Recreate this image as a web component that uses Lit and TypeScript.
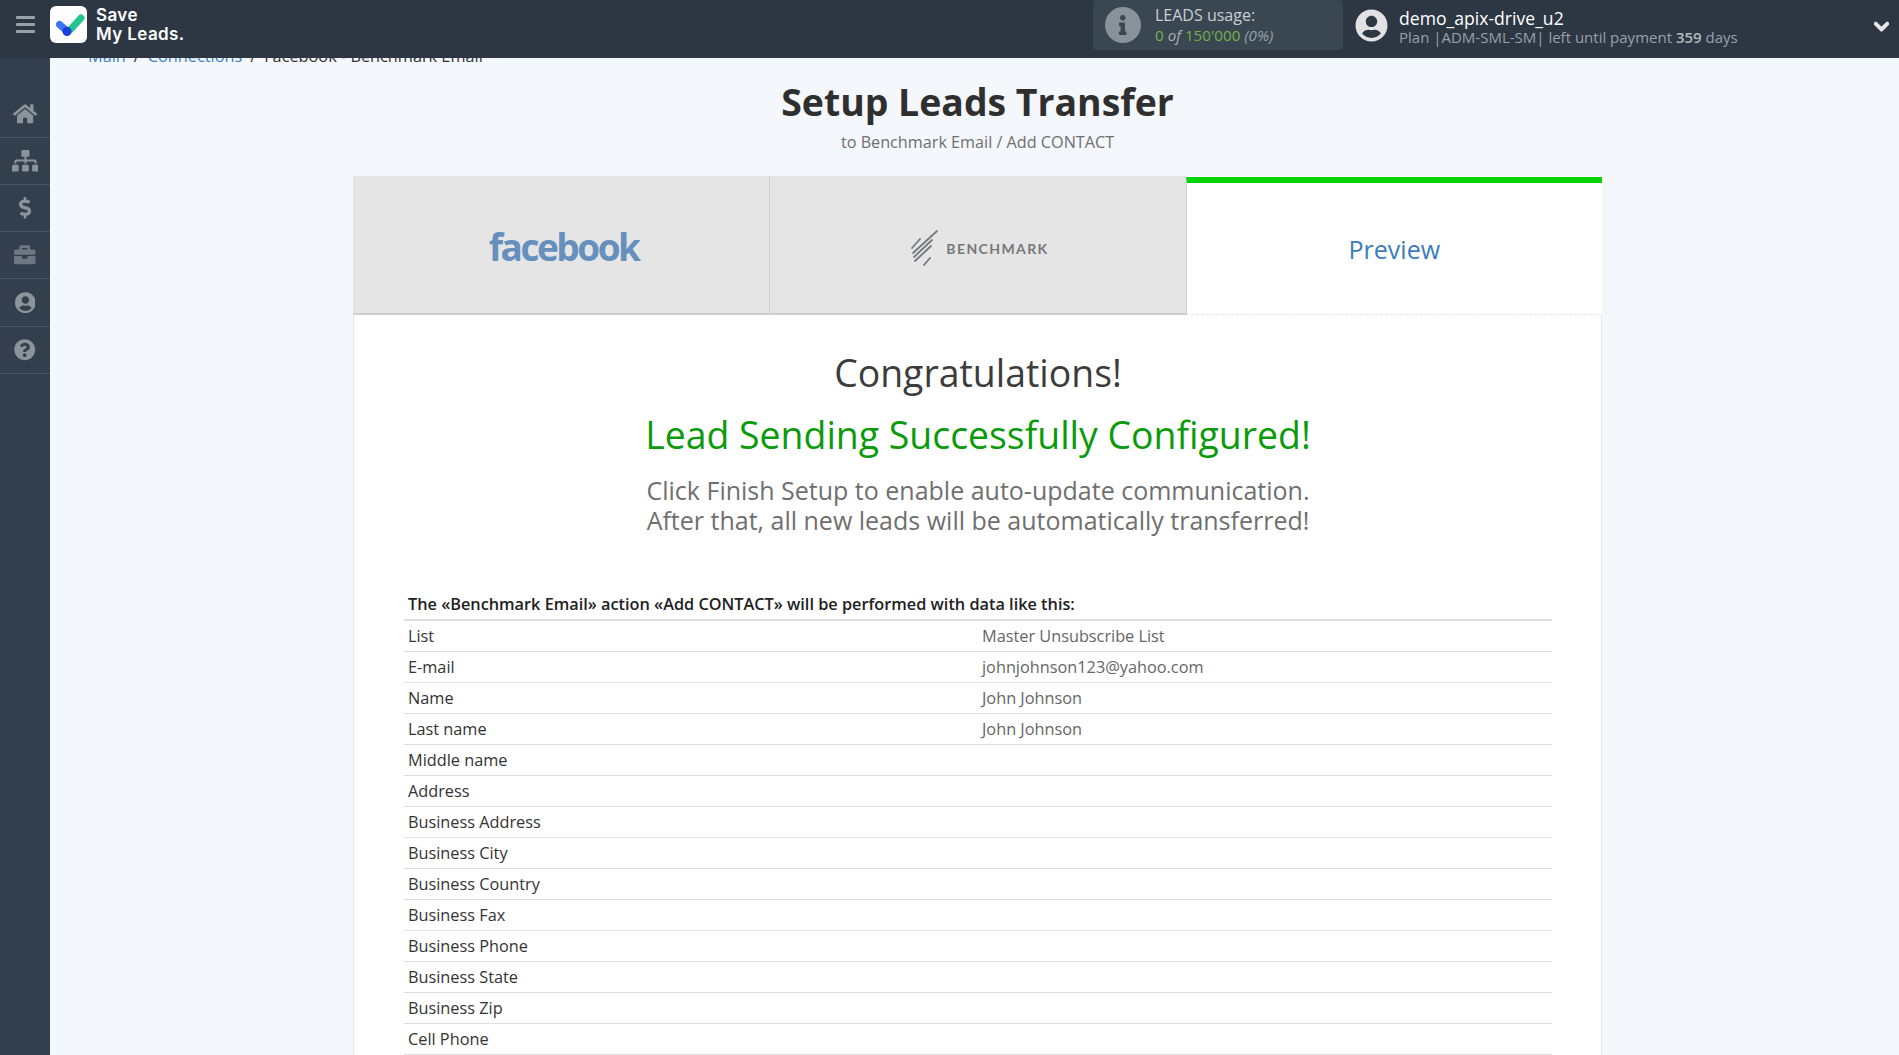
import { LitElement, html, css, svg } from 'lit';
import { customElement } from 'lit/decorators.js';

const ICONS: Record<string, [string, string]> = {
  home: ['0 0 576 512', 'M280.37 148.26L96 300.11V464a16 16 0 0 0 16 16l112.06-.29a16 16 0 0 0 15.92-16V368a16 16 0 0 1 16-16h64a16 16 0 0 1 16 16v95.64a16 16 0 0 0 16 16.05L464 480a16 16 0 0 0 16-16V300L295.67 148.26a12.19 12.19 0 0 0-15.3 0zM571.6 251.47L488 182.56V44.05a12 12 0 0 0-12-12h-56a12 12 0 0 0-12 12v72.61L318.47 43a48 48 0 0 0-61 0L4.34 251.47a12 12 0 0 0-1.6 16.9l25.5 31A12 12 0 0 0 45.15 301l235.22-193.74a12.19 12.19 0 0 1 15.3 0L530.9 301a12 12 0 0 0 16.9-1.6l25.5-31a12 12 0 0 0-1.7-16.93z'],
  sitemap: ['0 0 640 512', 'M128 352H32c-17.67 0-32 14.33-32 32v96c0 17.67 14.33 32 32 32h96c17.67 0 32-14.33 32-32v-96c0-17.67-14.33-32-32-32zm-24-80h192v48h48v-48h192v48h48v-57.59c0-21.17-17.23-38.41-38.41-38.41H344v-64h40c17.67 0 32-14.33 32-32V32c0-17.67-14.33-32-32-32H256c-17.67 0-32 14.33-32 32v96c0 17.67 14.33 32 32 32h40v64H94.41C73.23 224 56 241.23 56 262.41V320h48v-48zm264 80h-96c-17.67 0-32 14.33-32 32v96c0 17.67 14.33 32 32 32h96c17.67 0 32-14.33 32-32v-96c0-17.67-14.33-32-32-32zm240 0h-96c-17.67 0-32 14.33-32 32v96c0 17.67 14.33 32 32 32h96c17.67 0 32-14.33 32-32v-96c0-17.67-14.33-32-32-32z'],
  dollar: ['0 0 288 512', 'M209.2 233.4l-108-31.6C88.7 198.2 80 186.5 80 173.5c0-16.3 13.2-29.5 29.5-29.5h66.3c12.2 0 24.2 3.7 34.2 10.5 6.1 4.1 14.3 3.1 19.5-2l34.8-34c7.1-6.9 6.1-18.4-1.8-24.5C238 74.8 207.4 64.1 176 64V16c0-8.8-7.2-16-16-16h-32c-8.8 0-16 7.2-16 16v48h-2.5C45.8 64-5.4 118.7.5 183.6c4.2 46.1 39.4 83.6 83.8 96.6l102.5 30c12.5 3.7 21.2 15.3 21.2 28.3 0 16.3-13.2 29.5-29.5 29.5h-66.3C100 368 88 364.3 78 357.5c-6.1-4.1-14.3-3.1-19.5 2l-34.8 34c-7.1 6.9-6.1 18.4 1.8 24.5 24.5 19.2 55.1 29.9 86.5 30v48c0 8.8 7.2 16 16 16h32c8.8 0 16-7.2 16-16v-48.2c46.6-.9 90.3-28.6 105.7-72.7 21.5-61.6-14.6-124.8-72.5-141.7z'],
  briefcase: ['0 0 512 512', 'M320 336c0 8.84-7.16 16-16 16h-96c-8.84 0-16-7.16-16-16v-48H0v144c0 25.6 22.4 48 48 48h416c25.6 0 48-22.4 48-48V288H320v48zm144-208h-80V80c0-25.6-22.4-48-48-48H176c-25.6 0-48 22.4-48 48v48H48c-25.6 0-48 22.4-48 48v80h512v-80c0-25.6-22.4-48-48-48zm-144 0H192V96h128v32z'],
  user: ['0 0 496 512', 'M248 8C111 8 0 119 0 256s111 248 248 248 248-111 248-248S385 8 248 8zm0 96c48.6 0 88 39.4 88 88s-39.4 88-88 88-88-39.4-88-88 39.4-88 88-88zm0 344c-58.7 0-111.3-26.6-146.5-68.2 18.8-35.4 55.6-59.8 98.5-59.8 2.4 0 4.8.4 7.1 1.1 13 4.2 26.6 6.9 40.9 6.9 14.3 0 28-2.7 40.9-6.9 2.3-.7 4.7-1.1 7.1-1.1 42.9 0 79.7 24.4 98.5 59.8C359.3 421.4 306.7 448 248 448z'],
  help: ['0 0 512 512', 'M504 256c0 136.997-111.043 248-248 248S8 392.997 8 256C8 119.083 119.043 8 256 8s248 111.083 248 248zM262.655 90c-54.497 0-89.255 22.957-116.549 63.758-3.536 5.286-2.353 12.415 2.715 16.258l34.699 26.31c5.205 3.947 12.621 3.008 16.665-2.122 17.864-22.658 30.113-35.797 57.303-35.797 20.429 0 45.698 13.148 45.698 32.958 0 14.976-12.363 22.667-32.534 33.976C247.128 238.528 216 254.941 216 296v4c0 6.627 5.373 12 12 12h56c6.627 0 12-5.373 12-12v-1.333c0-28.462 83.186-29.647 83.186-106.667 0-58.002-60.165-102-116.531-102zM256 338c-25.365 0-46 20.635-46 46 0 25.364 20.635 46 46 46s46-20.636 46-46c0-25.365-20.635-46-46-46z'],
  info: ['0 0 192 512', 'M20 424.229h20V279.771H20c-11.046 0-20-8.954-20-20V212c0-11.046 8.954-20 20-20h112c11.046 0 20 8.954 20 20v212.229h20c11.046 0 20 8.954 20 20V492c0 11.046-8.954 20-20 20H20c-11.046 0-20-8.954-20-20v-47.771c0-11.046 8.954-20 20-20zM96 0C56.235 0 24 32.235 24 72s32.235 72 72 72 72-32.235 72-72S135.764 0 96 0z'],
  chevron: ['0 0 448 512', 'M207.029 381.476L12.686 187.132c-9.373-9.373-9.373-24.569 0-33.941l22.667-22.667c9.357-9.357 24.522-9.375 33.901-.04L224 284.505l154.745-154.021c9.379-9.335 24.544-9.317 33.901.04l22.667 22.667c9.373 9.373 9.373 24.569 0 33.941L240.971 381.476c-9.373 9.372-24.569 9.372-33.942 0z'],
};

const icon = (name: string, cls = '') => {
  const [box, d] = ICONS[name];
  return html`<svg class=${cls} viewBox=${box} fill="currentColor">${svg`<path d=${d}></path>`}</svg>`;
};

const NAV = ['home', 'sitemap', 'dollar', 'briefcase', 'user', 'help'];

const ROWS: [string, string][] = [
  ['List', 'Master Unsubscribe List'],
  ['E-mail', 'johnjohnson123@yahoo.com'],
  ['Name', 'John Johnson'],
  ['Last name', 'John Johnson'],
  ['Middle name', ''],
  ['Address', ''],
  ['Business Address', ''],
  ['Business City', ''],
  ['Business Country', ''],
  ['Business Fax', ''],
  ['Business Phone', ''],
  ['Business State', ''],
  ['Business Zip', ''],
  ['Cell Phone', ''],
];

@customElement('app-root')
export class AppRoot extends LitElement {
  static styles = css`
    :host {
      display: flex;
      flex-direction: column;
      height: 100vh;
      overflow: hidden;
      font-family: 'Open Sans', sans-serif;
      color: #333;
      background: #f4f7fc;
    }

    * {
      box-sizing: border-box;
    }

    .topbar {
      position: relative;
      z-index: 2;
      flex: none;
      display: flex;
      align-items: center;
      height: 58px;
      background: #2d3744;
      color: #fff;
    }

    .burger {
      width: 50px;
      display: flex;
      flex-direction: column;
      align-items: center;
      gap: 4px;
      margin-bottom: 9px;
    }

    .burger span {
      width: 19px;
      height: 3px;
      border-radius: 1px;
      background: #98a0a8;
    }

    .logo {
      width: 37px;
      height: 37px;
      margin-bottom: 9px;
      background: #fff;
      border-radius: 6px;
    }

    .wordmark {
      margin: 0 0 9px 9px;
      font-family: Inter, sans-serif;
      font-size: 17px;
      font-weight: 600;
      line-height: 19px;
      letter-spacing: 0.4px;
    }

    .usage {
      display: flex;
      align-items: center;
      width: 250px;
      height: 50px;
      margin-left: auto;
      margin-bottom: 8px;
      padding-left: 12px;
      background: #3a4752;
      border-radius: 4px;
      line-height: 20px;
      color: #c8ced3;
    }

    .info-dot {
      width: 36px;
      height: 36px;
      margin-right: 14px;
      border-radius: 50%;
      background: #8a9299;
      color: #3a4752;
      display: flex;
      align-items: center;
      justify-content: center;
    }

    .info-dot svg {
      height: 20px;
    }

    .usage-title {
      font-size: 16px;
    }

    .usage-count {
      font-size: 15.2px;
    }

    .usage .green {
      color: #74b14a;
    }

    .usage .muted {
      color: #96a0a8;
      font-style: italic;
    }

    .usage em {
      color: #aab2b8;
    }

    .account {
      display: flex;
      align-items: center;
      width: 556px;
      margin-bottom: 8px;
      padding-left: 12px;
    }

    .avatar {
      width: 33px;
      height: 33px;
      margin-right: 11px;
      color: #e2e2e2;
    }

    .account-text {
      margin-top: 4px;
    }

    .account-name {
      font-size: 17.6px;
      line-height: 20px;
      color: #fff;
    }

    .account-plan {
      font-size: 15px;
      line-height: 19px;
      color: #96a0aa;
    }

    .account-plan b {
      font-weight: 600;
      color: #b4bbc1;
    }

    .chevron {
      width: 15px;
      margin: 3px 10px 0 auto;
      color: #e8e8e8;
      stroke: currentColor;
      stroke-width: 36px;
    }

    .body {
      flex: 1;
      min-height: 0;
      display: flex;
    }

    .sidebar {
      flex: none;
      width: 50px;
      padding-top: 33px;
      background: #343f4d;
    }

    .nav-item {
      height: 47px;
      display: flex;
      align-items: center;
      justify-content: center;
      border-bottom: 1px solid #4a5563;
      color: #8b939b;
    }

    .nav-item:nth-child(4) {
      color: #6e7682;
    }

    .nav-item:nth-child(5) {
      height: 48px;
    }

    .nav-item svg {
      height: 21.5px;
    }

    .main {
      flex: 1;
      min-width: 0;
      overflow: hidden;
    }

    .crumbs {
      height: 14px;
      margin-top: -12px;
      padding-left: 38px;
      font-size: 16.3px;
      line-height: 20px;
      color: #333;
    }

    .crumbs a {
      color: #3b82c4;
    }

    .crumbs span {
      margin: 0 8px;
    }

    .column {
      width: 1249px;
      margin-left: 303px;
    }

    h1 {
      margin: 16px 0 0;
      text-align: center;
      font-size: 37.4px;
      line-height: 52px;
      font-weight: 700;
      color: #2f2f2f;
    }

    .subtitle {
      margin-top: 3px;
      text-align: center;
      font-size: 16.2px;
      line-height: 22px;
      color: #6f6f6f;
    }

    .card {
      margin-top: 23px;
      background: #fff;
      border-left: 1px solid #e6e8ec;
      border-right: 1px solid #e6e8ec;
    }

    .tabs {
      display: grid;
      grid-template-columns: 1fr 1fr 1fr;
      height: 139px;
      margin: 0 -1px;
    }

    .tab {
      display: flex;
      align-items: center;
      justify-content: center;
      background: #e5e5e5;
      border-bottom: 2px solid #cfcfcf;
    }

    .tab + .tab {
      border-left: 1px solid #cfcfcf;
    }

    .tab.active {
      margin-top: 1px;
      background: #fff;
      border-left: 1px solid #cfcfcf;
      border-top: 6px solid #06d306;
      border-bottom: 1px dashed #e8e8e8;
      font-size: 25px;
      color: #3a7dbd;
    }

    .facebook {
      padding-left: 5px;
      margin-top: 4px;
      font-size: 37px;
      font-weight: 700;
      letter-spacing: -2.5px;
      color: #6590bd;
      line-height: 1;
    }

    .benchmark {
      display: flex;
      align-items: center;
      gap: 7px;
      padding-left: 4px;
      margin-top: 7px;
      color: #77787b;
      font-family: Lato, sans-serif;
      font-size: 14px;
      font-weight: 700;
      letter-spacing: 1.4px;
    }

    .benchmark svg {
      width: 28px;
      height: 36px;
    }

    .result {
      padding: 32px 49px 0 50px;
    }

    .congrats {
      text-align: center;
      font-size: 37.4px;
      line-height: 52px;
      color: #3c3c3c;
    }

    .configured {
      margin-top: 10px;
      text-align: center;
      font-size: 37.4px;
      line-height: 52px;
      color: #0a9b0a;
    }

    .hint {
      margin-top: 14px;
      text-align: center;
      font-size: 25px;
      line-height: 30px;
      color: #6f6f6f;
    }

    .table-title {
      margin-top: 58px;
      padding-left: 4px;
      height: 28px;
      font-size: 16.3px;
      font-weight: 600;
      line-height: 22px;
      color: #222;
      border-bottom: 2px solid #e0e0e0;
    }

    .row {
      display: grid;
      grid-template-columns: 574px 1fr;
      height: 31px;
      padding-left: 4px;
      border-bottom: 1px solid #e0e0e0;
      font-size: 16.3px;
      line-height: 30px;
      color: #333;
    }

    .row .value {
      color: #666;
    }
  `;

  render() {
    return html`
      <header class="topbar">
        <div class="burger"><span></span><span></span><span></span></div>
        <svg class="logo" viewBox="0 0 37 37">
          <path d="M20 24 L31 12" stroke="#21c58e" stroke-width="7" stroke-linecap="round" fill="none"></path>
          <path d="M9.500 18.500 L17 25" stroke="#3b74f0" stroke-width="7" stroke-linecap="round" fill="none"></path>
          <circle cx="17" cy="25.500" r="4.500" fill="#1b3fd8"></circle>
        </svg>
        <div class="wordmark">Save<br />My Leads.</div>
        <div class="usage">
          <div class="info-dot">${icon('info')}</div>
          <div>
            <div class="usage-title">LEADS usage:</div>
            <div class="usage-count"><span class="green">0</span> <em>of</em> <span class="green">150'000</span> <span class="muted">(0%)</span></div>
          </div>
        </div>
        <div class="account">
          ${icon('user', 'avatar')}
          <div class="account-text">
            <div class="account-name">demo_apix-drive_u2</div>
            <div class="account-plan">Plan |ADM-SML-SM| left until payment <b>359</b> days</div>
          </div>
          ${icon('chevron', 'chevron')}
        </div>
      </header>
      <div class="body">
        <nav class="sidebar">
          ${NAV.map((n) => html`<div class="nav-item">${icon(n)}</div>`)}
        </nav>
        <main class="main">
          <div class="crumbs">
            <a>Main</a><span>/</span><a>Connections</a><span>/</span>Facebook - Benchmark Email
          </div>
          <div class="column">
            <h1>Setup Leads Transfer</h1>
            <div class="subtitle">to Benchmark Email / Add CONTACT</div>
            <section class="card">
              <div class="tabs">
                <div class="tab"><span class="facebook">facebook</span></div>
                <div class="tab">
                  <div class="benchmark">
                    <svg viewBox="0 0 28 36" stroke="currentColor" stroke-width="1.800" stroke-linecap="round" fill="none">
                      <path d="M1 18 L9 9"></path>
                      <path d="M2 23 L26 1"></path>
                      <path d="M3 27 L21 10"></path>
                      <path d="M4 31 L20 16"></path>
                      <path d="M13 35 L19 28"></path>
                    </svg>
                    BENCHMARK
                  </div>
                </div>
                <div class="tab active">Preview</div>
              </div>
              <div class="result">
                <div class="congrats">Congratulations!</div>
                <div class="configured">Lead Sending Successfully Configured!</div>
                <div class="hint">Click Finish Setup to enable auto-update communication.<br />After that, all new leads will be automatically transferred!</div>
                <div class="table-title">The «Benchmark Email» action «Add CONTACT» will be performed with data like this:</div>
                ${ROWS.map(
                  ([label, value]) => html`<div class="row"><div>${label}</div><div class="value">${value}</div></div>`
                )}
              </div>
            </section>
          </div>
        </main>
      </div>
    `;
  }
}
